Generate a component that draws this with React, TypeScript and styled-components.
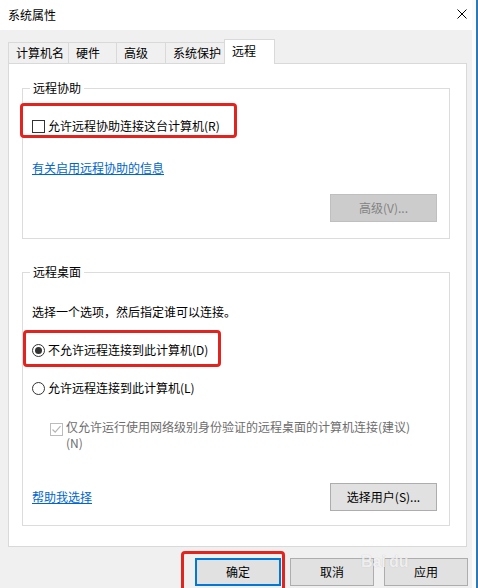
import React from "react";
import styled, { createGlobalStyle } from "styled-components";

const Global = createGlobalStyle`
  html, body { margin: 0; padding: 0; background: #fff; }
  body {
    font-family: "Noto Sans CJK SC", "Noto Sans", sans-serif;
    font-size: 12px;
    color: #000;
  }
  * { box-sizing: border-box; }
`;

const Window = styled.div`
  position: relative;
  display: flex;
  width: 478px;
  height: 588px;
  overflow: hidden;
  background: #fff;
`;

const Dialog = styled.div`
  width: 472px;
  flex: none;
  display: flex;
  flex-direction: column;
  background: #f0f0f0;
`;

const Gutter = styled.div`
  width: 4px;
  flex: none;
  background: #fbfbfb;
`;

const EdgeLine = styled.div`
  width: 2px;
  flex: none;
  background: #2e78b8;
`;

const TitleBar = styled.div`
  height: 30px;
  flex: none;
  background: #fff;
  display: flex;
  align-items: center;
  justify-content: space-between;
  padding: 0 5px 0 8px;
`;

const Title = styled.span`
  font-size: 12px;
  line-height: 16px;
`;

const CloseIcon = styled.svg`
  width: 10px;
  height: 10px;
  margin-top: -2px;
`;

const TabBar = styled.div`
  margin-top: 9px;
  height: 24px;
  flex: none;
  padding-left: 8px;
  display: flex;
  align-items: flex-end;
`;

const Tab = styled.div<{ $w: number; $active?: boolean }>`
  position: relative;
  width: ${(p) => p.$w}px;
  height: ${(p) => (p.$active ? 25 : 21)}px;
  margin-right: -1px;
  margin-bottom: ${(p) => (p.$active ? -1 : 0)}px;
  z-index: ${(p) => (p.$active ? 1 : 0)};
  padding: 0 0 ${(p) => (p.$active ? 2 : 0)}px 7px;
  display: flex;
  align-items: center;
  line-height: 16px;
  border: 1px solid #d9d9d9;
  border-bottom: none;
  background: ${(p) => (p.$active ? "#fff" : "#f0f0f0")};
  white-space: nowrap;
`;

const Panel = styled.div`
  margin-left: 8px;
  width: 459px;
  height: 484px;
  flex: none;
  border: 1px solid #d9d9d9;
  background: #fff;
  padding: 24px 0 0 13px;
  display: flex;
  flex-direction: column;
`;

const Group = styled.div<{ $h: number; $pt: number; $mt?: number }>`
  position: relative;
  width: 428px;
  height: ${(p) => p.$h}px;
  margin-top: ${(p) => p.$mt ?? 0}px;
  flex: none;
  border: 1px solid #dcdcdc;
  padding: ${(p) => p.$pt}px 12px 0 9px;
  display: flex;
  flex-direction: column;
  align-items: flex-start;
`;

const Legend = styled.span`
  position: absolute;
  top: -9px;
  left: 7px;
  padding: 0 3px;
  background: #fff;
  line-height: 16px;
`;

const Highlight = styled.div<{ $w: number; $ml?: number; $pad: string; $mt?: number; $h?: number }>`
  width: ${(p) => p.$w}px;
  ${(p) => (p.$h ? `height: ${p.$h}px;` : "")}
  margin-left: ${(p) => p.$ml ?? 0}px;
  margin-top: ${(p) => p.$mt ?? 0}px;
  padding: ${(p) => p.$pad};
  border: 3px solid #e3231d;
  border-radius: 4px;
  display: flex;
  align-items: flex-start;
  flex: none;
`;

const OptionRow = styled.div<{ $mt?: number }>`
  display: flex;
  align-items: center;
  gap: 3px;
  line-height: 16px;
  margin-top: ${(p) => p.$mt ?? 0}px;
  white-space: nowrap;
`;

const Check = styled.span<{ $disabled?: boolean }>`
  width: 13px;
  height: 13px;
  flex: none;
  border: 1px solid ${(p) => (p.$disabled ? "#bcbcbc" : "#333")};
  background: #fff;
  display: flex;
  align-items: center;
  justify-content: center;
`;

const Radio = styled.span<{ $checked?: boolean }>`
  width: 13px;
  height: 13px;
  flex: none;
  border: 1px solid #333;
  border-radius: 50%;
  background: #fff;
  display: flex;
  align-items: center;
  justify-content: center;
  &::after {
    content: "";
    width: 7px;
    height: 7px;
    border-radius: 50%;
    background: ${(p) => (p.$checked ? "#333" : "transparent")};
  }
`;

const Link = styled.a<{ $mt?: number }>`
  color: #0066cc;
  text-decoration: underline;
  line-height: 16px;
  margin-top: ${(p) => p.$mt ?? 0}px;
  cursor: pointer;
`;

const Text = styled.div<{ $mt?: number }>`
  line-height: 16px;
  margin-top: ${(p) => p.$mt ?? 0}px;
`;

const SubOption = styled.div<{ $mt?: number }>`
  display: flex;
  align-items: flex-start;
  gap: 3px;
  margin-top: ${(p) => p.$mt ?? 0}px;
  margin-left: 18px;
  line-height: 16px;
  color: #6d6d6d;
  & > span:first-child {
    margin-top: 4px;
  }
`;

const Button = styled.button<{ $w: number; $variant?: "disabled" | "default"; $mt?: number; $mr?: number; $ml?: number }>`
  width: ${(p) => p.$w}px;
  height: 28px;
  flex: none;
  margin: ${(p) => p.$mt ?? 0}px ${(p) => p.$mr ?? 0}px 0 ${(p) => p.$ml ?? 0}px;
  padding: 0;
  font-family: inherit;
  font-size: 12px;
  line-height: 16px;
  display: flex;
  align-items: center;
  justify-content: center;
  background: ${(p) => (p.$variant === "disabled" ? "#cccccc" : "#e1e1e1")};
  color: ${(p) => (p.$variant === "disabled" ? "#838383" : "#000")};
  border: ${(p) =>
    p.$variant === "default"
      ? "2px solid #0078d7"
      : p.$variant === "disabled"
      ? "1px solid #bfbfbf"
      : "1px solid #adadad"};
`;

const RightButton = styled(Button)`
  align-self: flex-end;
`;

const FooterRow = styled.div`
  align-self: stretch;
  display: flex;
  justify-content: space-between;
  align-items: center;
  margin-top: 32px;
`;

const ButtonRow = styled.div`
  flex: 1;
  display: flex;
  justify-content: flex-end;
  align-items: flex-start;
  padding: 4px 4px 0 0;
`;

const Watermark = styled.div`
  position: absolute;
  left: 361px;
  top: 553px;
  display: flex;
  align-items: baseline;
  gap: 3px;
  font-family: "Liberation Sans", sans-serif;
  font-size: 16px;
  font-weight: bold;
  line-height: 18px;
  color: rgba(255, 255, 255, 0.8);
  text-shadow: 0 0 1px rgba(0, 0, 0, 0.22);
  pointer-events: none;
`;

const tabs = [
  { label: "计算机名", w: 61 },
  { label: "硬件", w: 49 },
  { label: "高级", w: 50 },
  { label: "系统保护", w: 60 },
  { label: "远程", w: 51, active: true },
];

export default function App() {
  return (
    <>
      <Global />
      <Window>
        <Dialog>
          <TitleBar>
            <Title>系统属性</Title>
            <CloseIcon viewBox="0 0 10 10">
              <path d="M0.5 0.5 L9.5 9.5 M9.5 0.5 L0.5 9.5" stroke="#000" strokeWidth="1" fill="none" />
            </CloseIcon>
          </TitleBar>
          <TabBar>
            {tabs.map((t) => (
              <Tab key={t.label} $w={t.w} $active={t.active}>
                {t.label}
              </Tab>
            ))}
          </TabBar>
          <Panel>
            <Group $h={151} $pt={14}>
              <Legend>远程协助</Legend>
              <Highlight $w={217} $ml={-12} $pad="12px 0 1px 9px">
                <OptionRow>
                  <Check />
                  <span>允许远程协助连接这台计算机(R)</span>
                </OptionRow>
              </Highlight>
              <Link $mt={22}>有关启用远程协助的信息</Link>
              <RightButton $w={107} $variant="disabled" $mt={18}>
                高级(V)...
              </RightButton>
            </Group>
            <Group $h={254} $pt={31} $mt={33}>
              <Legend>远程桌面</Legend>
              <Text>选择一个选项，然后指定谁可以连接。</Text>
              <Highlight $w={198} $ml={-9} $mt={10} $pad="9px 0 6px 6px">
                <OptionRow>
                  <Radio $checked />
                  <span>不允许远程连接到此计算机(D)</span>
                </OptionRow>
              </Highlight>
              <OptionRow $mt={13}>
                <Radio />
                <span>允许远程连接到此计算机(L)</span>
              </OptionRow>
              <SubOption $mt={23}>
                <Check $disabled>
                  <svg width="11" height="11" viewBox="0 0 11 11">
                    <path d="M1.5 5.5 L4.2 8.2 L9.5 2.2" stroke="#b5b5b5" strokeWidth="1.2" fill="none" />
                  </svg>
                </Check>
                <span>
                  仅允许运行使用网络级别身份验证的远程桌面的计算机连接(建议)
                  <br />
                  (N)
                </span>
              </SubOption>
              <FooterRow>
                <Link>帮助我选择</Link>
                <Button $w={107}>选择用户(S)...</Button>
              </FooterRow>
            </Group>
          </Panel>
          <ButtonRow>
            <Highlight $w={104} $h={42} $pad="4px 1px 0 11px">
              <Button $w={86} $variant="default">
                确定
              </Button>
            </Highlight>
            <Button $w={84} $mt={7} $mr={10} $ml={5}>
              取消
            </Button>
            <Button $w={84} $mt={7}>
              应用
            </Button>
          </ButtonRow>
        </Dialog>
        <Gutter />
        <EdgeLine />
        <Watermark>
          <span>Bai</span>
          <span>du</span>
        </Watermark>
      </Window>
    </>
  );
}
